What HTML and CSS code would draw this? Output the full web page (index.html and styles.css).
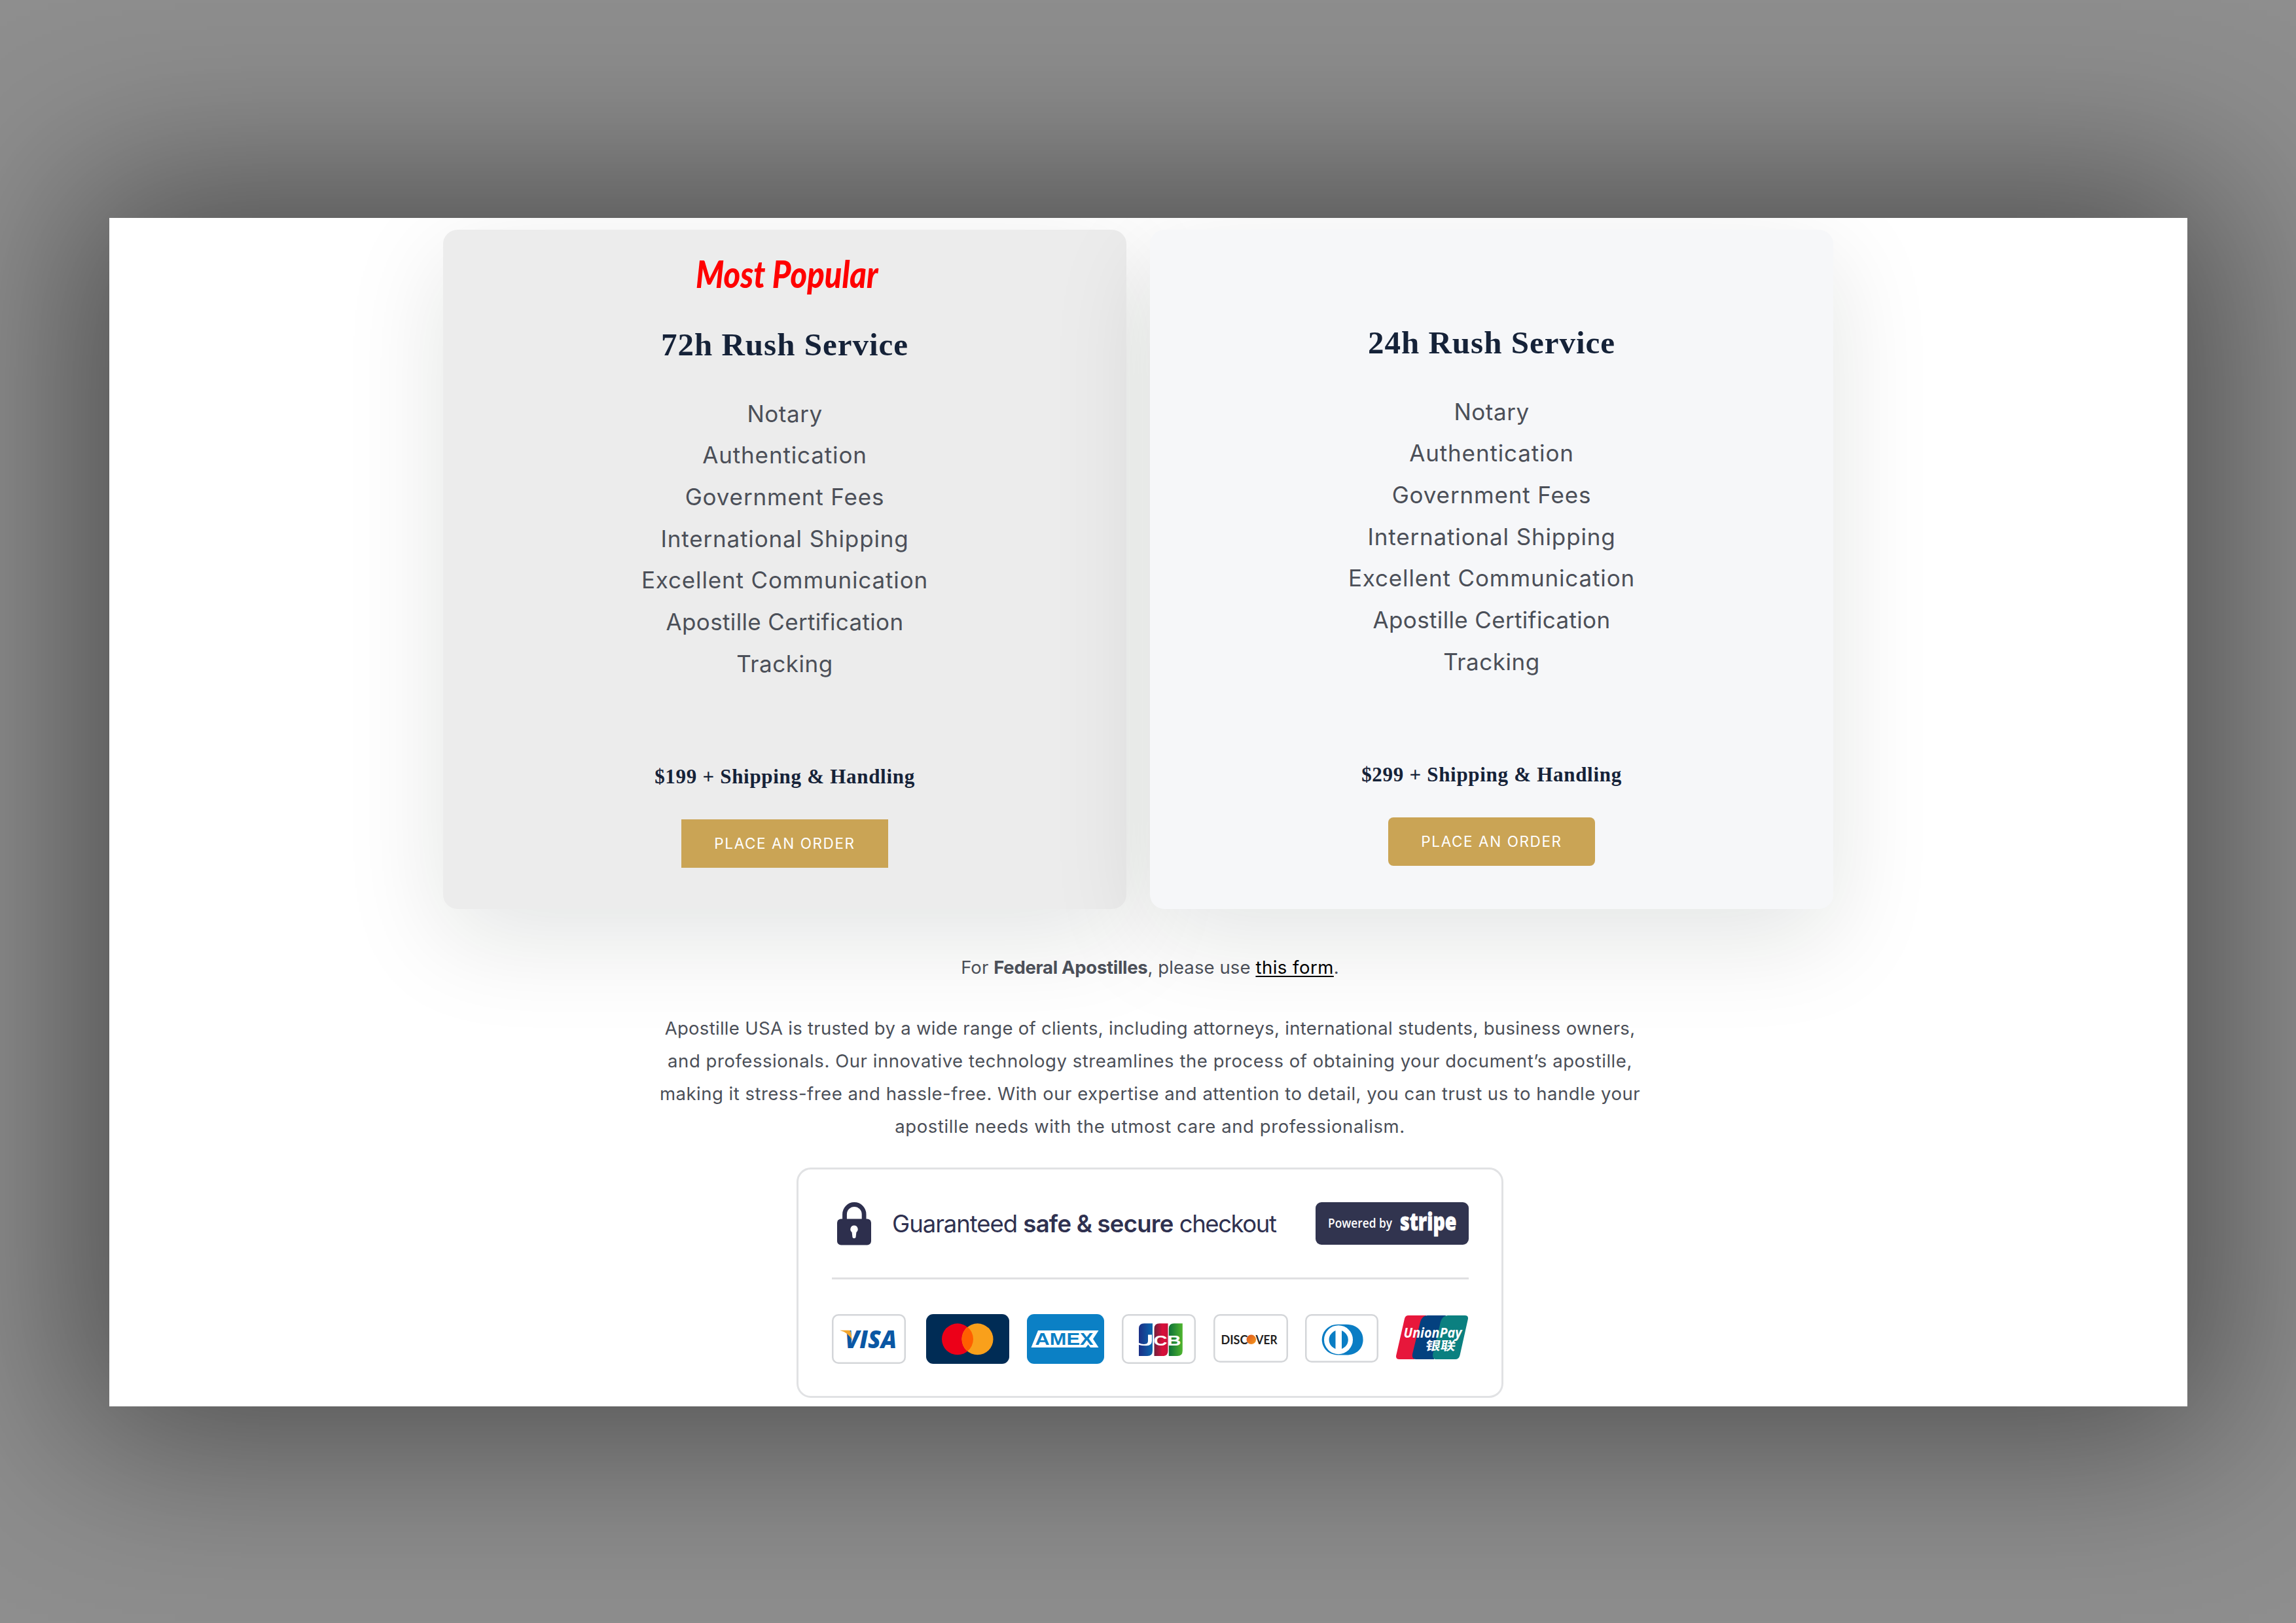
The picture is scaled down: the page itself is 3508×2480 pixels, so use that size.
FILE: index.html
```html
<!DOCTYPE html>
<html lang="en">
<head>
<meta charset="utf-8">
<title>Apostille USA – Rush Services</title>
<link rel="stylesheet" href="styles.css">
</head>
<body>
<main class="panel">
  <section class="plans">
    <article class="plan plan-popular">
      <div class="plan-badge"><span>Most Popular</span></div>
      <h2 class="plan-title">72h Rush Service</h2>
      <ul class="plan-features">
        <li>Notary</li>
        <li>Authentication</li>
        <li>Government Fees</li>
        <li>International Shipping</li>
        <li>Excellent Communication</li>
        <li>Apostille Certification</li>
        <li>Tracking</li>
      </ul>
      <p class="plan-price">$199 + Shipping &amp; Handling</p>
      <a class="button button-square">PLACE AN ORDER</a>
    </article>
    <article class="plan">
      <h2 class="plan-title">24h Rush Service</h2>
      <ul class="plan-features">
        <li>Notary</li>
        <li>Authentication</li>
        <li>Government Fees</li>
        <li>International Shipping</li>
        <li>Excellent Communication</li>
        <li>Apostille Certification</li>
        <li>Tracking</li>
      </ul>
      <p class="plan-price">$299 + Shipping &amp; Handling</p>
      <a class="button">PLACE AN ORDER</a>
    </article>
  </section>

  <section class="info">
    <p class="note">For <strong>Federal Apostilles</strong>, please use <a class="link">this form</a>.</p>
    <p class="about">
      <span>Apostille USA is trusted by a wide range of clients, including attorneys, international students, business owners,</span>
      <span>and professionals. Our innovative technology streamlines the process of obtaining your document’s apostille,</span>
      <span>making it stress-free and hassle-free. With our expertise and attention to detail, you can trust us to handle your</span>
      <span>apostille needs with the utmost care and professionalism.</span>
    </p>

    <div class="checkout">
      <div class="checkout-head">
        <svg class="lock" width="52" height="66" viewBox="0 0 52 66">
          <path d="M11.5 30V18.5a14.8 15 0 0 1 29.6 0V30" fill="none" stroke="#2d2f4d" stroke-width="6.8"/>
          <rect x="0" y="25.5" width="52" height="40" rx="6" fill="#2d2f4d"/>
          <path d="M26 35.5a5.8 5.8 0 0 1 3.4 10.4l-.9 7.6q-.3 1.8-2.5 1.8t-2.5-1.8l-.9-7.6a5.8 5.8 0 0 1 3.4-10.4z" fill="#fff"/>
        </svg>
        <p class="checkout-text"><span>Guaranteed</span> <b>safe &amp; secure</b> <span class="last">checkout</span></p>
        <div class="stripe">
          <svg width="234" height="65" viewBox="0 0 234 65">
            <text x="19" y="38.5" font-family="Open Sans, sans-serif" font-size="19" font-weight="600" fill="#fff" textLength="98" lengthAdjust="spacingAndGlyphs">Powered by</text>
            <text transform="translate(129 42.5) scale(.77 1)" font-family="Open Sans, sans-serif" font-size="37" font-weight="800" fill="#fff" stroke="#fff" stroke-width=".8">stripe</text>
          </svg>
        </div>
      </div>
      <div class="cards">
        <div class="card card-outline visa">
          <svg width="113" height="75" viewBox="0 0 113 75">
            <text x="20" y="51.8" font-family="Open Sans, sans-serif" font-size="37.5" font-weight="800" font-style="italic" fill="#0a57a4" textLength="79" lengthAdjust="spacingAndGlyphs">VISA</text>
            <path d="M12 24.8H25.5q2.8 0 3.5 3L31 40Q25 28 12 24.8z" fill="#f3a52c"/>
          </svg>
        </div>
        <div class="card">
          <svg width="127" height="76" viewBox="0 0 127 76">
            <rect width="127" height="76" rx="11" fill="#002c55"/>
            <circle cx="48" cy="38.3" r="24" fill="#ec0018"/>
            <circle cx="78.5" cy="38.3" r="24" fill="#f9a01b"/>
            <path d="M63.25 19.8a24 24 0 0 1 0 37a24 24 0 0 1 0-37z" fill="#ff5f00"/>
          </svg>
        </div>
        <div class="card">
          <svg width="118" height="76" viewBox="0 0 118 76">
            <rect width="118" height="76" rx="11" fill="#0b80c5"/>
            <path d="M17 25H109.5L101 38L109.5 51H97L93.5 46.5L90 51H6.5z" fill="#fff"/>
            <text x="12.5" y="47" font-family="Liberation Sans, sans-serif" font-size="26" font-weight="700" fill="#0b80c5" textLength="89" lengthAdjust="spacingAndGlyphs">AMEX</text>
          </svg>
        </div>
        <div class="card card-outline">
          <svg width="113" height="75" viewBox="0 0 113 75">
            <defs>
              <linearGradient id="jb"><stop offset="0" stop-color="#1b2f86"/><stop offset="1" stop-color="#0a66ad"/></linearGradient>
              <linearGradient id="jr"><stop offset="0" stop-color="#6d1f3c"/><stop offset=".6" stop-color="#d80f3a"/><stop offset="1" stop-color="#c9103a"/></linearGradient>
              <linearGradient id="jg"><stop offset="0" stop-color="#0d7038"/><stop offset="1" stop-color="#4fb52e"/></linearGradient>
            </defs>
            <path d="M34 14.3H47V56q0 8-8 8H26V22.3q0-8 8-8z" fill="url(#jb)"/>
            <path d="M57.5 14.3H70.5V56q0 8-8 8H49.5V22.3q0-8 8-8z" fill="url(#jr)"/>
            <path d="M79.8 14.3H92.8V56q0 8-8 8H71.8V22.3q0-8 8-8z" fill="url(#jg)"/>
            <path d="M26 44q6 2.8 11 1.5q3-.8 3-5V31.5h6V41q0 7-8 7.3q-7 .2-12-1.3z" fill="#fff"/>
            <text x="48.5" y="47.8" font-family="Liberation Sans, sans-serif" font-size="22.5" font-weight="700" fill="#fff" textLength="42" lengthAdjust="spacingAndGlyphs">CB</text>
          </svg>
        </div>
        <div class="card card-outline card-short">
          <svg width="114" height="74" viewBox="0 0 114 74">
            <defs><linearGradient id="dg" x1="0" y1="0" x2="1" y2="1"><stop offset="0" stop-color="#d9531e"/><stop offset="1" stop-color="#f79a1d"/></linearGradient></defs>
            <text x="11.5" y="45.5" font-family="Lato, sans-serif" font-size="18" font-weight="700" fill="#231f20" textLength="41" lengthAdjust="spacingAndGlyphs">DISC</text>
            <circle cx="57.8" cy="38.8" r="7.3" fill="url(#dg)"/>
            <text x="64.5" y="45.5" font-family="Lato, sans-serif" font-size="18" font-weight="700" fill="#231f20" textLength="33" lengthAdjust="spacingAndGlyphs">VER</text>
          </svg>
        </div>
        <div class="card card-outline card-short">
          <svg width="112" height="74" viewBox="0 0 112 74">
            <path d="M50 15.8H63C79 15.8 88.6 26 88.6 39S79 62.5 63 62.5H50C35 62.5 25.7 51 25.7 39S35 15.8 50 15.8z" fill="#0a7dc4"/>
            <circle cx="51" cy="39.2" r="22" fill="#fff"/>
            <circle cx="51.2" cy="39.2" r="14.6" fill="#0a7dc4"/>
            <rect x="46.5" y="24" width="9.5" height="31" fill="#fff"/>
          </svg>
        </div>
        <div class="card card-union">
          <svg width="110" height="67" viewBox="0 0 110 67">
            <path d="M19 0H46L28 67H5q-6 0-4.8-6L13 5q1.2-5 6-5z" fill="#e7173b"/>
            <path d="M48 0H76L58 67H30Q23 66 25.5 57L37 10Q40 0 48 0z" fill="#04417f"/>
            <path d="M79 0H105q6 0 4.8 6L97.5 61q-1.5 6-7 6H60Q54 65 57 56L68 10Q71 0 79 0z" fill="#0b8080"/>
            <text x="11.5" y="33.5" font-family="Open Sans, sans-serif" font-size="20.5" font-weight="700" font-style="italic" fill="#fff" textLength="89" lengthAdjust="spacingAndGlyphs">UnionPay</text>
            <text transform="translate(44 52.5) skewX(-10)" font-family="Noto Sans CJK SC, sans-serif" font-size="18.5" font-weight="700" fill="#fff" textLength="46" lengthAdjust="spacingAndGlyphs">银联</text>
          </svg>
        </div>
      </div>
    </div>
  </section>
</main>
</body>
</html>
```
FILE: styles.css
```css
* {
  box-sizing: border-box;
}

body {
  margin: 0;
  width: 3508px;
  height: 2480px;
  overflow: hidden;
  padding: 333px 166px 0 167px;
  background: #8e8e8e;
  font-family: Inter, sans-serif;
  color: #4b4f58;
}

h2,
p,
ul {
  margin: 0;
  padding: 0;
}

svg {
  display: block;
  overflow: visible;
}

.panel {
  height: 1816px;
  overflow: hidden;
  padding-top: 18px;
  background: #fff;
  box-shadow: 0 0 560px 50px rgba(0, 0, 0, 0.45);
}

/* Pricing cards */
.plans {
  display: grid;
  grid-template-columns: 1044px 1044px;
  column-gap: 36px;
  margin-left: 510px;
}

.plan {
  display: flex;
  flex-direction: column;
  align-items: center;
  height: 1038px;
  padding-top: 143px;
  border-radius: 22px;
  background: #f6f7f9;
  box-shadow: 0 45px 155px rgba(0, 25, 15, 0.115);
}

.plan-popular {
  padding-top: 37px;
  background: #ececec;
}

.plan-badge {
  height: 60px;
  margin-bottom: 49px;
  padding-left: 7px;
  font: italic 900 58px/60px Lato, sans-serif;
  color: #f00;
}

.plan-badge span {
  display: inline-block;
  transform: scaleX(0.843);
}

.plan-title {
  font: 700 49px/60px "Liberation Serif", serif;
  letter-spacing: 1px;
  color: #152238;
}

.plan-features {
  margin-top: 43.5px;
  list-style: none;
  text-align: center;
  font-size: 35px;
  line-height: 63.7px;
  letter-spacing: 0.86px;
}

.plan-features li:nth-child(1),
.plan-features li:nth-child(7) {
  letter-spacing: 0.53px;
}

.plan-features li:nth-child(6) {
  letter-spacing: 0.35px;
}

.plan-price {
  margin-top: 120.5px;
  font: 700 31px/40px "Liberation Serif", serif;
  letter-spacing: 0.7px;
  color: #152238;
}

.button {
  width: 316px;
  height: 74px;
  margin-top: 45.5px;
  border-radius: 8px;
  background: #caa455;
  color: #fff;
  text-align: center;
  font-size: 22.5px;
  line-height: 74px;
  letter-spacing: 1.6px;
}

.button-square {
  border-radius: 0;
}

/* Text and payment box */
.info {
  width: 1600px;
  margin: 64px 0 0 790px;
  text-align: center;
  font-size: 27.5px;
  line-height: 50px;
}

.note {
  letter-spacing: 0.1px;
}

.note strong {
  letter-spacing: -0.3px;
}

.link {
  color: #000;
  letter-spacing: 0.5px;
  text-decoration: underline;
  text-decoration-thickness: 2px;
  text-underline-offset: 3px;
  text-decoration-skip-ink: none;
}

.about {
  margin-top: 43px;
}

.about span {
  display: block;
  white-space: nowrap;
  letter-spacing: 0.5px;
}

.about span:nth-child(1) {
  letter-spacing: 0.3px;
}

.about span:nth-child(2) {
  letter-spacing: 0.55px;
}

.about span:nth-child(4) {
  letter-spacing: 0.6px;
}

.checkout {
  width: 1080px;
  height: 352px;
  margin: 38px auto 0;
  padding: 50px 50px 0 51px;
  border: 3px solid #e1e2e4;
  border-radius: 22px;
}

.checkout-head {
  display: flex;
  height: 118px;
  padding-left: 8px;
  border-bottom: 3px solid #e0e0e2;
}

.checkout-text {
  margin-left: 32px;
  white-space: nowrap;
  font-size: 36.5px;
  line-height: 66px;
  letter-spacing: -1.05px;
  color: #2f3150;
}

.checkout-text b {
  font-weight: 600;
  letter-spacing: -0.75px;
}

.checkout-text .last {
  letter-spacing: -1.45px;
}

.stripe {
  width: 234px;
  height: 65px;
  margin-left: auto;
  border-radius: 9px;
  background: #31344f;
}

.cards {
  display: flex;
  gap: 26.9px;
  margin-top: 53px;
}

.card {
  flex: none;
  height: 76px;
}

.card-outline {
  border-radius: 10px;
  box-shadow: inset 0 0 0 2.5px #d4d6d9;
}

.card-short {
  height: 74px;
}

.visa {
  margin-right: 4px;
}

.card-union {
  margin-top: 2px;
}
```
